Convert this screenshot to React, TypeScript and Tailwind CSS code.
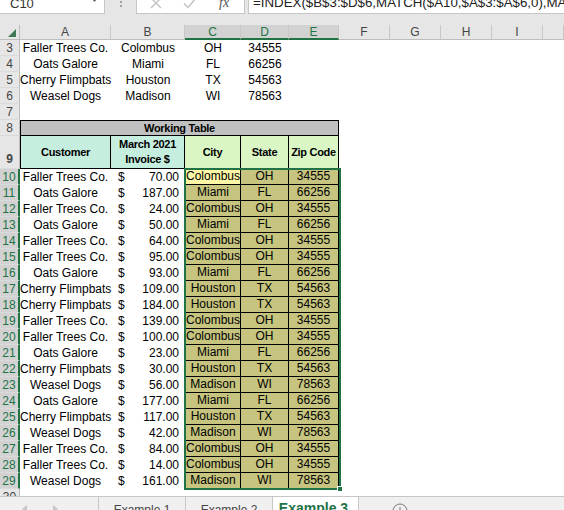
import React from 'react';
import clsx from 'clsx';

const customers = [
  { name: 'Faller Trees Co.', city: 'Colombus', state: 'OH', zip: '34555' },
  { name: 'Oats Galore', city: 'Miami', state: 'FL', zip: '66256' },
  { name: 'Cherry Flimpbats', city: 'Houston', state: 'TX', zip: '54563' },
  { name: 'Weasel Dogs', city: 'Madison', state: 'WI', zip: '78563' },
];

// [customer index, invoice amount]
const invoices: [number, string][] = [
  [0, '70.00'],
  [1, '187.00'],
  [0, '24.00'],
  [1, '50.00'],
  [0, '64.00'],
  [0, '95.00'],
  [1, '93.00'],
  [2, '109.00'],
  [2, '184.00'],
  [0, '139.00'],
  [0, '100.00'],
  [1, '23.00'],
  [2, '30.00'],
  [3, '56.00'],
  [1, '177.00'],
  [2, '117.00'],
  [3, '42.00'],
  [0, '84.00'],
  [0, '14.00'],
  [3, '161.00'],
];

const columns = [
  { key: 'A', w: 'w-[91px]' },
  { key: 'B', w: 'w-[74px]' },
  { key: 'C', w: 'w-[56px]', sel: true },
  { key: 'D', w: 'w-[48px]', sel: true },
  { key: 'E', w: 'w-[50px]', sel: true },
  { key: 'F', w: 'w-[51px]' },
  { key: 'G', w: 'w-[51px]' },
  { key: 'H', w: 'w-[51px]' },
  { key: 'I', w: 'w-[51px]' },
  { key: '', w: 'w-[21px]' },
];

const RowHead: React.FC<{ n: number; selected?: boolean; bottom?: boolean }> = ({ n, selected, bottom }) => (
  <div
    className={clsx(
      'flex w-[20px] shrink-0 justify-center border-b border-b-[#dadada] text-[12px] leading-none',
      selected
        ? 'border-r-2 border-r-[#217346] bg-[#d2d2d2] text-[#217346]'
        : 'border-r border-r-[#bdbdbd] bg-[#e6e6e6] text-[#444]',
      bottom ? 'items-end pb-[3px]' : 'items-center',
    )}
  >
    {n}
  </div>
);

const FormulaBar = () => (
  <div className="flex h-[25px] overflow-hidden bg-[#e6e6e6]">
    <div className="-mt-[8px] flex h-[22px] w-[105px] items-center justify-between border border-l-0 border-[#c6c6c6] bg-white pl-[10px] pr-[6px]">
      <span className="text-[13px] leading-none text-[#333]">C10</span>
      <svg width="7" height="4" viewBox="0 0 7 4" className="mt-[-6px]">
        <path d="M0 0h7L3.5 4z" fill="#666" />
      </svg>
    </div>
    <div className="flex w-[31px] justify-center pt-[1px]">
      <div className="flex flex-col gap-[2px]">
        <span className="h-[2px] w-[2px] bg-[#a0a0a0]" />
        <span className="h-[2px] w-[2px] bg-[#a0a0a0]" />
      </div>
    </div>
    <div className="-mt-[8px] flex h-[22px] w-[109px] items-center border border-[#c6c6c6] bg-white">
      <svg width="12" height="12" viewBox="0 0 12 12" className="ml-[13px]">
        <path d="M1 1l10 10M11 1L1 11" stroke="#c2c2c2" strokeWidth="1.4" />
      </svg>
      <svg width="14" height="12" viewBox="0 0 14 12" className="ml-[21px]">
        <path d="M1 6.5l4 4L13 1" stroke="#c2c2c2" strokeWidth="1.5" fill="none" />
      </svg>
      <span className="ml-[22px] font-['Liberation_Serif',serif] text-[14px] italic leading-none text-[#555]">fx</span>
    </div>
    <div className="w-[3px]" />
    <div className="-mt-[8px] flex h-[22px] flex-1 items-center overflow-hidden whitespace-nowrap border border-r-0 border-[#c6c6c6] bg-white pl-[4px] text-[13.3px] leading-none text-[#222]">
      =INDEX($B$3:$D$6,MATCH($A10,$A$3:$A$6,0),MATCH(B$9,$B$2:$D$2,0))
    </div>
  </div>
);

const ColumnHeader = () => (
  <div className="flex h-[15px] text-[12px] leading-none">
    <div className="relative w-[20px] shrink-0 border-b border-r border-[#bdbdbd] bg-[#e6e6e6]">
      <svg width="8" height="8" viewBox="0 0 8 8" className="absolute bottom-[2px] right-[3px]">
        <path d="M8 0v8H0z" fill="#3d7a55" />
      </svg>
    </div>
    {columns.map((c) => (
      <div
        key={c.key || 'J'}
        className={clsx(
          c.w,
          'flex shrink-0 items-center justify-center border-r border-r-[#c8c8c8]',
          c.sel
            ? 'border-b-2 border-b-[#217346] bg-[#d2d2d2] text-[#217346]'
            : 'border-b border-b-[#bdbdbd] bg-[#e6e6e6] text-[#444]',
        )}
      >
        {c.key}
      </div>
    ))}
  </div>
);

const Sheet = () => (
  <div className="relative h-[456px] overflow-hidden text-[12px] leading-[16px] text-black">
    {customers.map((c, i) => (
      <div key={c.name} className="flex h-[16px]">
        <RowHead n={i + 3} />
        <div className="w-[91px] shrink-0 whitespace-nowrap text-center">{c.name}</div>
        <div className="w-[74px] shrink-0 text-center">{c.city}</div>
        <div className="w-[56px] shrink-0 text-center">{c.state}</div>
        <div className="w-[48px] shrink-0 text-center">{c.zip}</div>
      </div>
    ))}

    <div className="flex h-[16px]">
      <RowHead n={7} />
    </div>

    <div className="flex h-[16px]">
      <RowHead n={8} />
      <div className="w-[319px] shrink-0 border border-black bg-[#c0c0c0] text-center text-[11px] font-bold leading-[14px] tracking-[-0.3px]">
        Working Table
      </div>
    </div>

    <div className="flex h-[33px] text-[11px] font-bold tracking-[-0.3px]">
      <RowHead n={9} bottom />
      <div className="flex w-[91px] shrink-0 items-center justify-center border-b border-l border-r border-black bg-[#c6eedf] font-bold">
        Customer
      </div>
      <div className="flex w-[74px] shrink-0 flex-col items-center justify-center border-b border-r border-black bg-[#c6eedf] leading-[15px]">
        <span>March 2021</span>
        <span>Invoice $</span>
      </div>
      <div className="flex w-[56px] shrink-0 items-center justify-center border-b border-r border-black bg-[#daf6c5]">City</div>
      <div className="flex w-[48px] shrink-0 items-center justify-center border-b border-r border-black bg-[#daf6c5]">State</div>
      <div className="flex w-[50px] shrink-0 items-center justify-center border-b border-r border-black bg-[#daf6c5]">Zip Code</div>
    </div>

    {invoices.map(([ci, amt], i) => {
      const c = customers[ci];
      return (
        <div key={i} className="flex h-[16px]">
          <RowHead n={i + 10} selected />
          <div className="w-[91px] shrink-0 whitespace-nowrap text-center">{c.name}</div>
          <div className="flex w-[74px] shrink-0 justify-between pl-[7px] pr-[6px]">
            <span>$</span>
            <span>{amt}</span>
          </div>
          <div
            className={clsx(
              'w-[56px] shrink-0 whitespace-nowrap border-b border-l border-r border-black text-center leading-[15px]',
              i === 0 ? 'bg-[#fdf7a6]' : 'bg-[#c6c47e]',
            )}
          >
            {c.city}
          </div>
          <div className="w-[48px] shrink-0 border-b border-r border-black bg-[#c6c47e] text-center leading-[15px]">{c.state}</div>
          <div className="w-[50px] shrink-0 border-b border-r border-black bg-[#c6c47e] text-center leading-[15px]">{c.zip}</div>
        </div>
      );
    })}

    <div className="flex h-[16px]">
      <RowHead n={30} />
    </div>

    <div className="pointer-events-none absolute left-[184px] top-[128px] h-[322px] w-[157px] border-2 border-[#217346]">
      <div className="absolute -bottom-[4px] -right-[4px] h-[6px] w-[6px] border border-white bg-[#217346]" />
    </div>
  </div>
);

const SheetTabs = () => (
  <div className="flex h-[14px] overflow-hidden border-t border-[#c6c6c6] bg-[#f0f0f0] text-[12px] leading-[14px] text-[#444]">
    <div className="flex w-[99px] shrink-0 items-start gap-[26px] border-r border-[#c6c6c6] pl-[22px] pt-[8px]">
      <svg width="5" height="8" viewBox="0 0 5 8">
        <path d="M5 0v8L0 4z" fill="#c8c8c8" />
      </svg>
      <svg width="5" height="8" viewBox="0 0 5 8">
        <path d="M0 0v8l5-4z" fill="#c8c8c8" />
      </svg>
    </div>
    <div className="w-[87px] shrink-0 border-r border-[#c6c6c6] pt-[6px] text-center">Example 1</div>
    <div className="w-[87px] shrink-0 border-r border-[#c6c6c6] pt-[6px] text-center">Example 2</div>
    <div className="-mt-px w-[86px] shrink-0 border-r border-[#c6c6c6] bg-white pt-[5px] pr-[4px] text-center text-[14px] font-bold text-[#217346]">
      Example 3
    </div>
    <div className="pl-[33px] pt-[6px]">
      <svg width="16" height="16" viewBox="0 0 16 16">
        <circle cx="8" cy="8" r="7" stroke="#777" strokeWidth="1" fill="none" />
        <path d="M8 4v8M4 8h8" stroke="#777" strokeWidth="1" />
      </svg>
    </div>
  </div>
);

export default function App() {
  return (
    <div className="h-[510px] w-[564px] overflow-hidden bg-white font-['Liberation_Sans',Arial,sans-serif]">
      <FormulaBar />
      <ColumnHeader />
      <Sheet />
      <SheetTabs />
    </div>
  );
}
